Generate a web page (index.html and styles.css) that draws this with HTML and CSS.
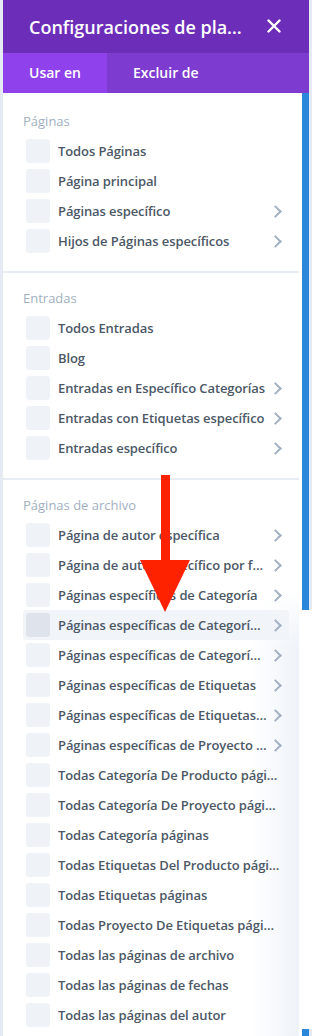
FILE: index.html
```html
<!DOCTYPE html>
<html lang="es">
<head>
  <meta charset="UTF-8">
  <meta name="viewport" content="width=device-width, initial-scale=1.0">
  <title>Configuraciones de plantilla</title>
  <link rel="stylesheet" href="styles.css">
</head>
<body>
  <div class="modal">
    <div class="modal-header">
      <h1 class="modal-title">Configuraciones de plantilla</h1>
      <svg class="close" width="14" height="14" viewBox="0 0 14 14">
        <path d="M1.5 1.5 L12.5 12.5 M12.5 1.5 L1.5 12.5" stroke="#fff" stroke-width="2.4" stroke-linecap="round"/>
      </svg>
    </div>
    <div class="tabs">
      <div class="tab active">Usar en</div>
      <div class="tab">Excluir de</div>
    </div>

    <div class="modal-body">
      <div class="list">
        <div class="group">
          <div class="group-title">Páginas</div>
          <div class="option"><span class="box"></span><span class="label">Todos Páginas</span></div>
          <div class="option"><span class="box"></span><span class="label">Página principal</span></div>
          <div class="option more"><span class="box"></span><span class="label">Páginas específico</span></div>
          <div class="option more"><span class="box"></span><span class="label">Hijos de Páginas específicos</span></div>
        </div>

        <div class="group">
          <div class="group-title">Entradas</div>
          <div class="option"><span class="box"></span><span class="label">Todos Entradas</span></div>
          <div class="option"><span class="box"></span><span class="label">Blog</span></div>
          <div class="option more"><span class="box"></span><span class="label">Entradas en Específico Categorías</span></div>
          <div class="option more"><span class="box"></span><span class="label">Entradas con Etiquetas específico</span></div>
          <div class="option more"><span class="box"></span><span class="label">Entradas específico</span></div>
        </div>

        <div class="group last">
          <div class="group-title">Páginas de archivo</div>
          <div class="option more"><span class="box"></span><span class="label">Página de autor específica</span></div>
          <div class="option more"><span class="box"></span><span class="label">Página de autor específico por función</span></div>
          <div class="option more"><span class="box"></span><span class="label">Páginas específicas de Categoría</span></div>
          <div class="option more hover"><span class="box"></span><span class="label">Páginas específicas de Categoría de producto</span></div>
          <div class="option more"><span class="box"></span><span class="label">Páginas específicas de Categoría de proyecto</span></div>
          <div class="option more"><span class="box"></span><span class="label">Páginas específicas de Etiquetas</span></div>
          <div class="option more"><span class="box"></span><span class="label">Páginas específicas de Etiquetas del producto</span></div>
          <div class="option more"><span class="box"></span><span class="label">Páginas específicas de Proyecto Etiquetas</span></div>
          <div class="option"><span class="box"></span><span class="label">Todas Categoría De Producto páginas</span></div>
          <div class="option"><span class="box"></span><span class="label">Todas Categoría De Proyecto páginas</span></div>
          <div class="option"><span class="box"></span><span class="label">Todas Categoría páginas</span></div>
          <div class="option"><span class="box"></span><span class="label">Todas Etiquetas Del Producto páginas</span></div>
          <div class="option"><span class="box"></span><span class="label">Todas Etiquetas páginas</span></div>
          <div class="option"><span class="box"></span><span class="label">Todas Proyecto De Etiquetas páginas</span></div>
          <div class="option"><span class="box"></span><span class="label">Todas las páginas de archivo</span></div>
          <div class="option"><span class="box"></span><span class="label">Todas las páginas de fechas</span></div>
          <div class="option"><span class="box"></span><span class="label">Todas las páginas del autor</span></div>
        </div>

        <!-- flecha roja de la captura -->
        <svg class="arrow" width="50" height="137" viewBox="0 0 50 137">
          <rect x="21" y="0" width="9" height="86" fill="#ff2200"/>
          <polygon points="0,85 50,85 25,137" fill="#ff2200"/>
        </svg>
      </div>

      <div class="rail">
        <div class="rail-bar"></div>
        <div class="rail-fill"></div>
        <div class="rail-end"></div>
      </div>
    </div>
  </div>
</body>
</html>
```

FILE: styles.css
```css
body {
  margin: 0;
  background-color: #e6ebf3;
  font-family: "Open Sans", Arial, sans-serif;
}
.modal {
  margin-left: 3px;
  width: 309px;
}
.modal-header {
  width: 306px;
  height: 53px;
  box-sizing: border-box;
  padding: 0 28px 0 26px;
  background-color: #6c2eb9;
  display: flex;
  align-items: center;
}
.modal-title {
  flex: 1;
  min-width: 0;
  margin: 0 22px 0 0;
  color: #fff;
  font-size: 18px;
  font-weight: 600;
  white-space: nowrap;
  overflow: hidden;
  text-overflow: ellipsis;
}
.close {
  flex: none;
  margin-top: -2px;
}
.tabs {
  width: 306px;
  height: 40px;
  display: flex;
  background-color: #7e3bd0;
}
.tab {
  padding: 0 26px;
  color: #fff;
  font-size: 14px;
  font-weight: 600;
  line-height: 40px;
}
.tab.active {
  background-color: #8f42ec;
}
.modal-body {
  display: flex;
}
.list {
  position: relative;
  width: 296px;
  padding-top: 3px;
  background-color: #fff;
}
.list::after {
  content: "";
  position: absolute;
  top: 495px;
  right: 0;
  bottom: 0;
  width: 48px;
  background: linear-gradient(to right, rgba(238, 243, 249, 0), #eef3f9);
  -webkit-mask-image: linear-gradient(to bottom, transparent, #000 60px);
  mask-image: linear-gradient(to bottom, transparent, #000 60px);
  pointer-events: none;
}
.group {
  position: relative;
  z-index: 1;
  padding: 16px 10px 15px 20px;
  border-bottom: 2px solid #e8edf4;
}
.group.last {
  border-bottom: none;
  padding-bottom: 6px;
}
.group-title {
  color: #a2b0c1;
  font-size: 13px;
  line-height: 18px;
  margin-bottom: 6px;
}
.option {
  display: flex;
  align-items: center;
  height: 30px;
  padding: 0 7px 0 3px;
  border-radius: 3px;
}
.option.hover {
  background-color: #f1f4f9;
}
.box {
  flex: none;
  width: 24px;
  height: 24px;
  border-radius: 3px;
  background-color: #eff2f7;
}
.option.hover .box {
  background-color: #dfe4ec;
}
.label {
  flex: 1;
  min-width: 0;
  margin-left: 8px;
  color: #4c5866;
  font-size: 13px;
  font-weight: 600;
  letter-spacing: -0.1px;
  white-space: nowrap;
  overflow: hidden;
  text-overflow: ellipsis;
}
.option.more::after {
  content: "";
  flex: none;
  width: 7px;
  height: 7px;
  margin: 0 2px 0 3px;
  border-top: 2px solid #a2b0c1;
  border-right: 2px solid #a2b0c1;
  transform: rotate(45deg);
}
.arrow {
  position: absolute;
  z-index: 2;
  left: 137px;
  top: 382px;
}
.rail {
  width: 13px;
  display: flex;
  flex-direction: column;
}
.rail-bar,
.rail-end {
  background: linear-gradient(to right, #fff 3px, #2b87da 3px, #2b87da 10px, #e6ebf3 10px);
}
.rail-bar {
  height: 517px;
}
.rail-fill {
  flex: 1;
  background-color: #fff;
}
.rail-end {
  height: 7px;
}
```
